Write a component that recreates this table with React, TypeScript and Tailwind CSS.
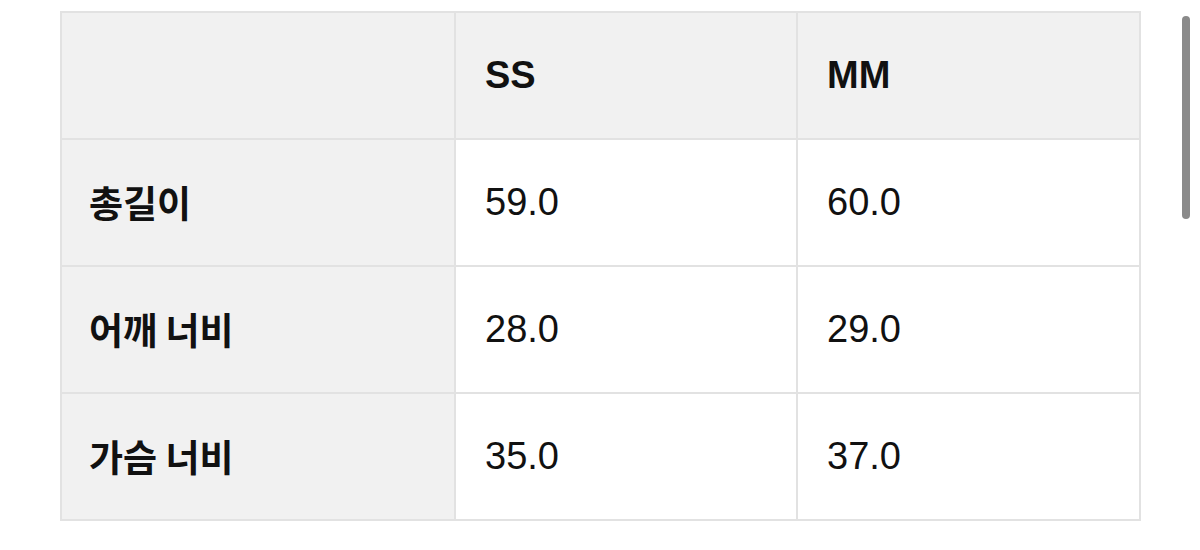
export default function App() {
  const rows = [
    ["총길이", "59.0", "60.0"],
    ["어깨 너비", "28.0", "29.0"],
    ["가슴 너비", "35.0", "37.0"],
  ];
  const font = { fontFamily: '"Liberation Sans", Arial, "Noto Sans CJK KR", sans-serif' };
  return (
    <div className="relative w-[1200px] h-[550px] bg-white overflow-hidden" style={font}>
      <div className="pl-[60px] pt-[11px]">
        <table className="w-[1079px] border-collapse table-fixed text-[38px] text-[#111]">
          <colgroup>
            <col className="w-[394px]" />
            <col className="w-[342px]" />
            <col className="w-[343px]" />
          </colgroup>
          <thead>
            <tr className="h-[127px] bg-[#f1f1f1]">
              <th className="border-2 border-[#e2e2e2]"></th>
              <th className="border-2 border-[#e2e2e2] text-left pl-[29px] font-bold">SS</th>
              <th className="border-2 border-[#e2e2e2] text-left pl-[29px] font-bold">MM</th>
            </tr>
          </thead>
          <tbody>
            {rows.map((r) => (
              <tr key={r[0]} className="h-[127px]">
                <td className="border-2 border-[#e2e2e2] bg-[#f1f1f1] pl-[27px] font-bold text-[37px]" style={{ fontFamily: '"Noto Sans CJK KR", sans-serif' }}>
                  {r[0]}
                </td>
                <td className="border-2 border-[#e2e2e2] pl-[29px]">{r[1]}</td>
                <td className="border-2 border-[#e2e2e2] pl-[29px]">{r[2]}</td>
              </tr>
            ))}
          </tbody>
        </table>
      </div>
      <div className="absolute left-[1182px] top-[16px] w-[8px] h-[203px] rounded-full bg-[#8a8a8a]"></div>
    </div>
  );
}
